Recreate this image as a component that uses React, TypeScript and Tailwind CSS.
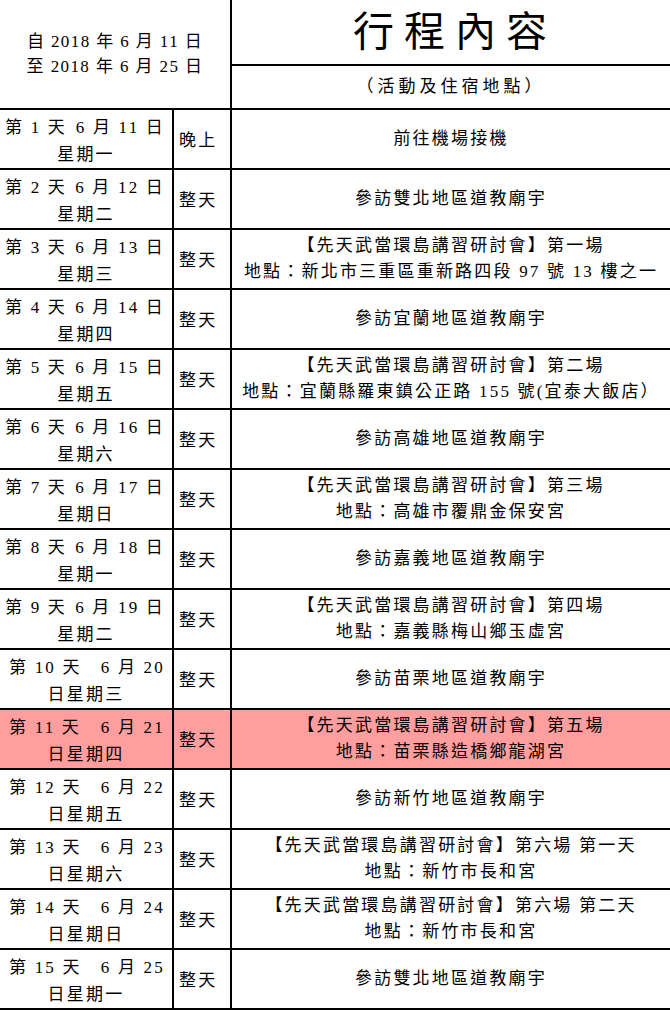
const font = { fontFamily: '"Liberation Serif", "Noto Sans CJK TC", serif' };

type Day = {
  day: string;
  date: string;
  week: string;
  meal: string;
  lines: string[];
  hi?: boolean;
};

const days: Day[] = [
  { day: "第 1 天", date: "6 月 11 日", week: "星期一", meal: "晚上", lines: ["前往機場接機"] },
  { day: "第 2 天", date: "6 月 12 日", week: "星期二", meal: "整天", lines: ["參訪雙北地區道教廟宇"] },
  {
    day: "第 3 天",
    date: "6 月 13 日",
    week: "星期三",
    meal: "整天",
    lines: ["【先天武當環島講習研討會】第一場", "地點：新北市三重區重新路四段 97 號 13 樓之一"],
  },
  { day: "第 4 天", date: "6 月 14 日", week: "星期四", meal: "整天", lines: ["參訪宜蘭地區道教廟宇"] },
  {
    day: "第 5 天",
    date: "6 月 15 日",
    week: "星期五",
    meal: "整天",
    lines: ["【先天武當環島講習研討會】第二場", "地點：宜蘭縣羅東鎮公正路 155 號(宜泰大飯店）"],
  },
  { day: "第 6 天", date: "6 月 16 日", week: "星期六", meal: "整天", lines: ["參訪高雄地區道教廟宇"] },
  {
    day: "第 7 天",
    date: "6 月 17 日",
    week: "星期日",
    meal: "整天",
    lines: ["【先天武當環島講習研討會】第三場", "地點：高雄市覆鼎金保安宮"],
  },
  { day: "第 8 天", date: "6 月 18 日", week: "星期一", meal: "整天", lines: ["參訪嘉義地區道教廟宇"] },
  {
    day: "第 9 天",
    date: "6 月 19 日",
    week: "星期二",
    meal: "整天",
    lines: ["【先天武當環島講習研討會】第四場", "地點：嘉義縣梅山鄉玉虛宮"],
  },
  { day: "第 10 天", date: "6 月 20", week: "日星期三", meal: "整天", lines: ["參訪苗栗地區道教廟宇"] },
  {
    day: "第 11 天",
    date: "6 月 21",
    week: "日星期四",
    meal: "整天",
    lines: ["【先天武當環島講習研討會】第五場", "地點：苗栗縣造橋鄉龍湖宮"],
    hi: true,
  },
  { day: "第 12 天", date: "6 月 22", week: "日星期五", meal: "整天", lines: ["參訪新竹地區道教廟宇"] },
  {
    day: "第 13 天",
    date: "6 月 23",
    week: "日星期六",
    meal: "整天",
    lines: ["【先天武當環島講習研討會】第六場 第一天", "地點：新竹市長和宮"],
  },
  {
    day: "第 14 天",
    date: "6 月 24",
    week: "日星期日",
    meal: "整天",
    lines: ["【先天武當環島講習研討會】第六場 第二天", "地點：新竹市長和宮"],
  },
  { day: "第 15 天", date: "6 月 25", week: "日星期一", meal: "整天", lines: ["參訪雙北地區道教廟宇"] },
];

function Row({ d, index }: { d: Day; index: number }) {
  const bg = d.hi ? "bg-[#ff9e9e]" : "bg-white";
  return (
    <>
      <div className={`${bg} h-[58px] flex flex-col justify-center pt-[4px] leading-[27px]`}>
        <div className={`flex justify-between pr-[7px] ${index >= 9 ? "pl-[9px]" : "pl-[5px]"}`}>
          <span>{d.day}</span>
          <span>{d.date}</span>
        </div>
        <div className="text-center">{d.week}</div>
      </div>
      <div className={`${bg} flex items-center pl-[5px] pt-[3px]`}>{d.meal}</div>
      <div className={`${bg} flex flex-col items-center justify-center leading-[26px] whitespace-nowrap`}>
        {d.lines.map((l) => (
          <div key={l}>{l}</div>
        ))}
      </div>
    </>
  );
}

export default function App() {
  return (
    <div className="w-[670px] h-[1011px] bg-white text-black overflow-hidden" style={font}>
      <div className="grid grid-cols-[172px_56px_1fr] grid-rows-[64px_42px] auto-rows-[58px] gap-[2px] bg-black pb-[2px] text-[17px] tracking-[2.2px]">
        <div className="col-span-2 row-span-2 bg-white flex flex-col items-center justify-center leading-[25px] tracking-[1.4px]">
          <div>自 2018 年 6 月 11 日</div>
          <div>至 2018 年 6 月 25 日</div>
        </div>
        <div className="bg-white flex items-center justify-center text-[41px] tracking-[10px] leading-none pl-[8px]">
          行程內容
        </div>
        <div className="bg-white flex items-center justify-center tracking-[4px]">（活動及住宿地點）</div>
        {days.map((d, i) => (
          <Row key={d.day} d={d} index={i} />
        ))}
      </div>
    </div>
  );
}
